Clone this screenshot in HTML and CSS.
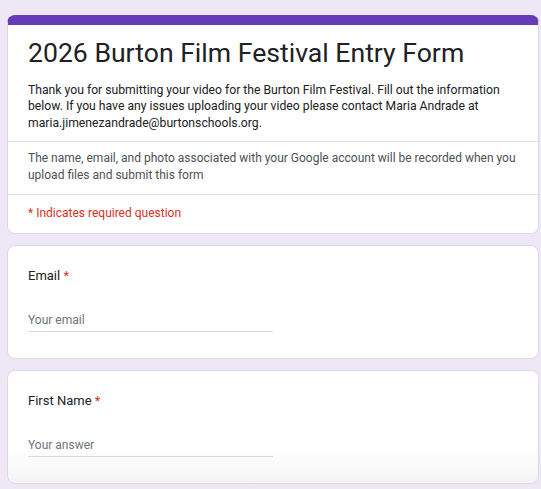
FILE: index.html
```html
<!DOCTYPE html>
<html lang="en">
<head>
<meta charset="utf-8">
<title>2026 Burton Film Festival Entry Form</title>
<link rel="stylesheet" href="styles.css">
</head>
<body>
<main class="form">
  <section class="card header-card">
    <div class="header-main">
      <h1 class="title">2026 Burton Film Festival Entry Form</h1>
      <p class="desc">Thank you for submitting your video for the Burton Film Festival. Fill out the information below. If you have any issues uploading your video please contact Maria Andrade at maria.jimenezandrade@burtonschools.org.</p>
    </div>
    <div class="header-note">The name, email, and photo associated with your Google account will be recorded when you upload files and submit this form</div>
    <div class="header-req">* Indicates required question</div>
  </section>

  <section class="card question">
    <div class="q-label">Email <span class="req">*</span></div>
    <div class="q-input">Your email</div>
  </section>

  <section class="card question fade">
    <div class="q-label">First Name <span class="req">*</span></div>
    <div class="q-input">Your answer</div>
  </section>
</main>
</body>
</html>
```
FILE: styles.css
```css
html, body {
  margin: 0;
  padding: 0;
}
body {
  background: #ede7f6;
  font-family: Roboto, "Noto Sans", "Liberation Sans", sans-serif;
  color: #202124;
  height: 489px;
  overflow: hidden;
}
.form {
  padding: 15px 0 0 7px;
  width: 532px;
  display: flex;
  flex-direction: column;
  gap: 11px;
}
.card {
  background: #fff;
  border: 1px solid #dadce0;
  border-radius: 8px;
  box-sizing: border-box;
}
.header-card {
  border-top: 10px solid #673ab7;
  height: 219px;
}
.header-main {
  padding: 12px 8px 10px 20px;
  border-bottom: 1px solid #dadce0;
}
.title {
  margin: 0;
  font-weight: 400;
  font-size: 26.6px;
  line-height: 32px;
  letter-spacing: 0;
}
.desc {
  margin: 12.5px 0 0 0;
  font-size: 12.2px;
  line-height: 16.5px;
}
.header-note {
  padding: 8px 8px 10px 20px;
  font-size: 12px;
  line-height: 17px;
  color: #4d5156;
  border-bottom: 1px solid #dadce0;
}
.header-req {
  padding: 10px 20px 0 20px;
  font-size: 12px;
  line-height: 17px;
  color: #d93025;
}
.question {
  height: 114px;
  padding: 20px 20px 0 20px;
}
.q-label {
  font-size: 13px;
  line-height: 20px;
}
.req {
  color: #d93025;
}
.q-input {
  margin-top: 24.5px;
  width: 245px;
  font-size: 12px;
  line-height: 18px;
  padding-bottom: 2px;
  color: #70757a;
  border-bottom: 1px solid #dadce0;
}
.fade {
  background: linear-gradient(to bottom, #fff 0%, #fff 70%, #f4f4f6 100%);
}
```
